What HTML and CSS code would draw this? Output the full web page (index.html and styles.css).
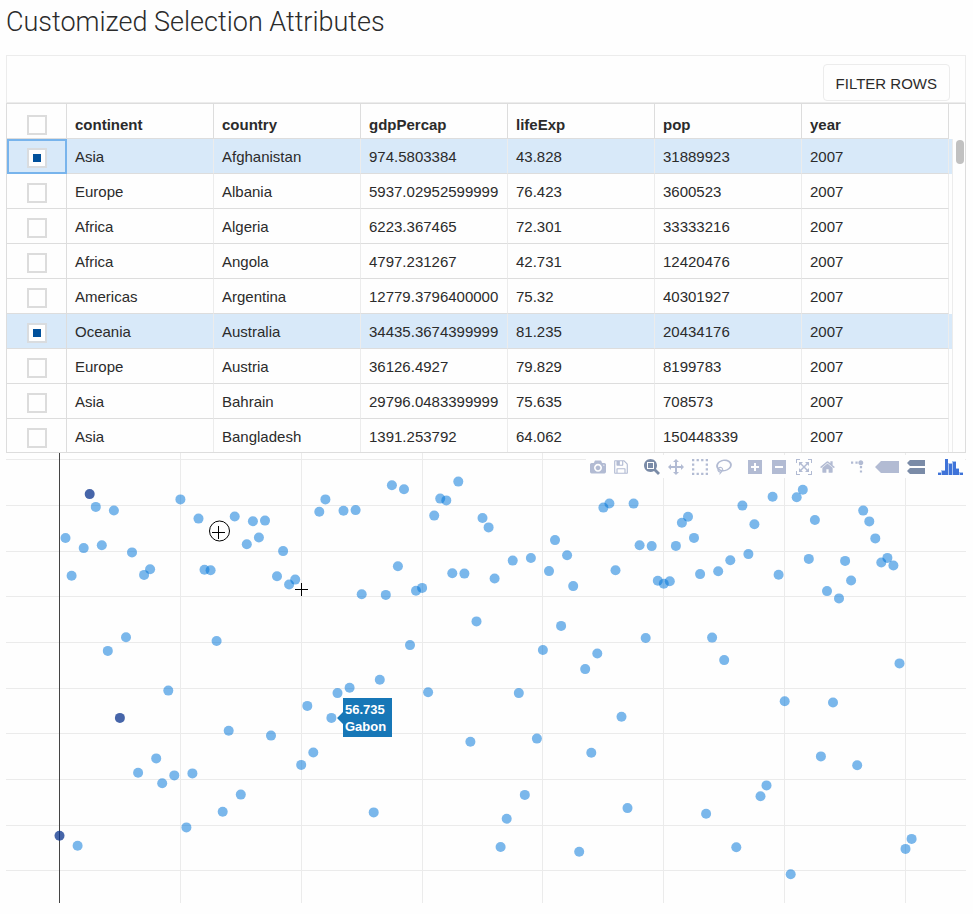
FILE: index.html
```html
<!DOCTYPE html>
<html lang="en">
<head>
<meta charset="utf-8">
<title>Customized Selection Attributes</title>
<link rel="stylesheet" href="styles.css">
</head>
<body>
<main>
  <h1>Customized Selection Attributes</h1>

  <section class="toolbar">
    <button type="button" class="filter-button">FILTER ROWS</button>
  </section>

  <section class="grid">
    <table>
      <colgroup>
        <col class="col-check"><col><col><col><col><col><col><col class="col-end">
      </colgroup>
      <thead>
        <tr>
          <th><input type="checkbox" aria-label="Select all rows"></th>
          <th scope="col">continent</th><th scope="col">country</th><th scope="col">gdpPercap</th><th scope="col">lifeExp</th><th scope="col">pop</th><th scope="col">year</th><td class="end"></td>
        </tr>
      </thead>
      <tbody id="rows"></tbody>
    </table>
    <div class="scrollbar"><div class="thumb"></div></div>
  </section>

  <section class="plot">
    <svg class="chart" viewBox="0 0 960 450" role="img" aria-label="Life expectancy by country">
      <g id="gridlines"></g>
      <path class="zeroline" d="M53.5 0V450"/>
      <g id="points"></g>
      <g class="hover">
        <path class="hover-box" d="M331 265L337 259V245H386V284H337V271Z"/>
        <text x="339" y="261">56.735</text>
        <text x="339" y="278">Gabon</text>
      </g>
      <g class="cursors">
        <circle cx="213.500" cy="78" r="10"/>
        <path d="M206 79.500H219M212.500 73V86M289 136.500H302M295.500 130V143"/>
      </g>
    </svg>
    <div class="modebar">
      <div class="group">
        <button type="button" aria-label="Download plot"><svg width="16" height="16" viewBox="0 0 1000 1000"><path transform="matrix(1 0 0 -1 0 850)" d="m500 450c-83 0-150-67-150-150 0-83 67-150 150-150 83 0 150 67 150 150 0 83-67 150-150 150z m400 150h-120c-16 0-34 13-39 29l-31 93c-6 15-23 28-40 28h-340c-16 0-34-13-39-28l-31-94c-6-15-23-28-40-28h-120c-55 0-100-45-100-100v-450c0-55 45-100 100-100h800c55 0 100 45 100 100v450c0 55-45 100-100 100z m-400-550c-138 0-250 112-250 250 0 138 112 250 250 250 138 0 250-112 250-250 0-138-112-250-250-250z m365 380c-19 0-35 16-35 35 0 19 16 35 35 35 19 0 35-16 35-35 0-19-16-35-35-35z"/></svg></button>
        <button type="button" aria-label="Save and edit"><svg width="14" height="16" viewBox="0 0 857 1000"><path transform="matrix(1 0 0 -1 0 850)" d="m214-7h429v214h-429v-214z m500 0h72v500q0 8-6 21t-11 20l-157 156q-5 6-19 12t-22 5v-232q0-22-15-38t-38-16h-322q-22 0-37 16t-16 38v232h-72v-714h72v232q0 22 16 38t37 16h465q22 0 38-16t15-38v-232z m-214 518v178q0 8-5 13t-13 5h-107q-7 0-13-5t-5-13v-178q0-8 5-13t13-5h107q7 0 13 5t5 13z m357-18v-518q0-22-15-38t-38-16h-750q-23 0-38 16t-16 38v750q0 22 16 38t38 16h517q23 0 50-12t42-26l156-157q16-15 27-42t11-49z"/></svg></button>
      </div>
      <div class="group">
        <button type="button" class="active" aria-label="Zoom"><svg width="16" height="16" viewBox="0 0 1000 1000"><path transform="matrix(1 0 0 -1 0 850)" d="m1000-25l-250 251c40 63 63 138 63 218 0 224-182 406-407 406-224 0-406-182-406-406s183-406 407-406c80 0 155 22 218 62l250-250 125 125z m-812 250l0 438 437 0 0-438-437 0z m62 375l313 0 0-312-313 0 0 312z"/></svg></button>
        <button type="button" aria-label="Pan"><svg width="16" height="16" viewBox="0 0 1000 1000"><path transform="matrix(1 0 0 -1 0 850)" d="m1000 350l-187 188 0-125-250 0 0 250 125 0-188 187-187-187 125 0 0-250-250 0 0 125-188-188 186-187 0 125 252 0 0-250-125 0 187-188 188 188-125 0 0 250 250 0 0-126 187 188z"/></svg></button>
        <button type="button" aria-label="Box select"><svg width="16" height="16" viewBox="0 0 1000 1000"><path transform="matrix(1 0 0 -1 0 850)" d="m0 850l0-143 143 0 0 143-143 0z m286 0l0-143 143 0 0 143-143 0z m285 0l0-143 143 0 0 143-143 0z m286 0l0-143 143 0 0 143-143 0z m-857-286l0-143 143 0 0 143-143 0z m857 0l0-143 143 0 0 143-143 0z m-857-285l0-143 143 0 0 143-143 0z m857 0l0-143 143 0 0 143-143 0z m-857-286l0-143 143 0 0 143-143 0z m286 0l0-143 143 0 0 143-143 0z m285 0l0-143 143 0 0 143-143 0z m286 0l0-143 143 0 0 143-143 0z"/></svg></button>
        <button type="button" aria-label="Lasso select"><svg width="16" height="16" viewBox="0 0 1031 1000"><path transform="matrix(1 0 0 -1 0 850)" d="m1018 538c-36 207-290 336-568 286-277-48-473-256-436-463 10-57 36-108 76-151-13-66 11-137 68-183 34-28 75-41 114-42l-55-70 0 0c-2-1-3-2-4-3-10-14-8-34 5-45 14-11 34-8 45 4 1 1 2 3 2 5l0 0 113 140c16 11 31 24 45 40 4 3 6 7 8 11 48-3 100 0 151 9 278 48 473 255 436 462z m-624-379c-80 14-149 48-197 96 42 42 109 47 156 9 33-26 47-66 41-105z m-187-74c-19 16-33 37-39 60 50-32 109-55 174-68-42-25-95-24-135 8z m360 75c-34-7-69-9-102-8 8 62-16 128-68 170-73 59-175 54-244-5-9 20-16 40-20 61-28 159 121 317 333 354s407-60 434-217c28-159-121-318-333-355z"/></svg></button>
      </div>
      <div class="group">
        <button type="button" aria-label="Zoom in"><svg width="16" height="16" viewBox="0 0 1000 1000"><path transform="matrix(1 0 0 -1 0 850)" d="m1 787l0-875 875 0 0 875-875 0z m687-500l-187 0 0-187-125 0 0 187-188 0 0 125 188 0 0 187 125 0 0-187 187 0 0-125z"/></svg></button>
        <button type="button" aria-label="Zoom out"><svg width="16" height="16" viewBox="0 0 1000 1000"><path transform="matrix(1 0 0 -1 0 850)" d="m0 788l0-876 875 0 0 876-875 0z m688-500l-500 0 0 125 500 0 0-125z"/></svg></button>
        <button type="button" aria-label="Autoscale"><svg width="16" height="16" viewBox="0 0 1000 1000"><path transform="matrix(1 0 0 -1 0 850)" d="m250 850l-187 0-63 0 0-62 0-188 63 0 0 188 187 0 0 62z m688 0l-188 0 0-62 188 0 0-188 62 0 0 188 0 62-62 0z m-875-938l0 188-63 0 0-188 0-62 63 0 187 0 0 62-187 0z m875 188l0-188-188 0 0-62 188 0 62 0 0 62 0 188-62 0z m-125 188l-1 0-93-94-156 156 156 156 92-93 2 0 0 250-250 0 0-2 93-92-156-156-156 156 94 92 0 2-250 0 0-250 0 0 93 93 157-156-157-156-93 94 0 0 0-250 250 0 0 0-94 93 156 157 156-157-93-93 0 0 250 0 0 250z"/></svg></button>
        <button type="button" aria-label="Reset axes"><svg width="15" height="16" viewBox="0 0 929 1000"><path transform="matrix(1 0 0 -1 0 850)" d="m786 296v-267q0-15-11-26t-25-10h-214v214h-143v-214h-214q-15 0-25 10t-11 26v267q0 1 0 2t0 2l321 264 321-264q1-1 1-4z m124 39l-34-41q-5-5-12-6h-2q-7 0-12 3l-386 322-386-322q-7-4-13-4-7 2-12 7l-35 41q-4 5-3 13t6 12l401 334q18 15 42 15t43-15l136-114v109q0 8 5 13t13 5h107q8 0 13-5t5-13v-227l122-102q5-5 6-12t-4-13z"/></svg></button>
      </div>
      <div class="group">
        <button type="button" aria-label="Toggle spike lines"><svg width="16" height="16" viewBox="0 0 1000 1000"><path transform="matrix(1.5 0 0 -1.5 0 850)" d="M512 409c0-57-46-104-103-104-57 0-104 47-104 104 0 57 47 103 104 103 57 0 103-46 103-103z m-327-39l92 0 0 92-92 0z m-185 0l92 0 0 92-92 0z m370-186l92 0 0 93-92 0z m0-184l92 0 0 92-92 0z"/></svg></button>
        <button type="button" aria-label="Show closest data on hover"><svg width="24" height="16" viewBox="0 0 1500 1000"><path transform="matrix(1 0 0 -1 0 850)" d="m375 725l0 0-375-375 375-374 0-1 1125 0 0 750-1125 0z"/></svg></button>
        <button type="button" class="active" aria-label="Compare data on hover"><svg width="18" height="16" viewBox="0 0 1125 1000"><path transform="matrix(1 0 0 -1 0 850)" d="m187 786l0 2-187-188 188-187 0 0 937 0 0 373-938 0z m0-499l0 1-187-188 188-188 0 0 937 0 0 376-938-1z"/></svg></button>
      </div>
      <div class="group logo">
        <a href="#" aria-label="Produced with Plotly"><svg width="25" height="16" viewBox="0 0 25 16"><path class="logo-soft" d="M0 13H3V16H0ZM3 11H7V16H3ZM10 4H14V16H10ZM14 2H18V16H14ZM18 9H21V16H18ZM21 13H25V16H21Z"/><path d="M0 14H3V16H0ZM4 12H7V16H4ZM7 0H10V16H7ZM11 5H14V16H11ZM15 3H18V16H15ZM18 10H21V16H18ZM22 14H25V16H22Z"/></svg></a>
      </div>
    </div>
  </section>
</main>
<script src="app.js"></script>
</body>
</html>
```
FILE: styles.css
```css
* {
  box-sizing: border-box;
}

body {
  margin: 0;
  padding: 0 7px 0 6px;
  background: #fefefe;
  color: #2b2b2b;
  font-family: "Liberation Sans", Arial, sans-serif;
  font-size: 15px;
}

h1 {
  margin: 0;
  padding: 4px 0 15px;
  font-family: Roboto, "Liberation Sans", sans-serif;
  font-size: 27px;
  font-weight: 300;
  line-height: 36px;
}

.toolbar {
  display: flex;
  justify-content: flex-end;
  padding: 8px 15px 1px;
  border: 1px solid #ececec;
}

.filter-button {
  height: 37px;
  padding: 2px 12px 0;
  border: 1px solid #ececec;
  border-radius: 4px;
  background: #fefefe;
  color: #2b2b2b;
  font: inherit;
}

.grid {
  display: flex;
  border: 1px solid #ddd;
}

table {
  flex: 1;
  width: 100%;
  min-width: 0;
  table-layout: fixed;
  border-collapse: separate;
  border-spacing: 0;
}

.col-check {
  width: 60px;
}

.col-end {
  width: 4px;
}

th,
td {
  height: 35px;
  padding: 2px 8px 0;
  overflow: hidden;
  border-right: 1px solid #ececec;
  border-bottom: 1px solid #ddd;
  line-height: 20px;
  text-align: left;
  white-space: nowrap;
}

th {
  padding-top: 7px;
  border-right-color: #ddd;
}

th:first-child,
td:first-child {
  padding-top: 3px;
  border-right-color: #ddd;
  text-align: center;
}

th:first-child {
  padding-top: 7px;
}

tbody tr:last-child td {
  height: 33px;
  padding-top: 3px;
  border-bottom: 0;
}

tbody tr:last-child td:first-child {
  padding-top: 5px;
}

tr .end,
tbody tr:last-child .end {
  padding: 0;
  border-bottom: 0;
}

thead .end {
  border-right: 0;
}

.selected td {
  background: #d8e9f9;
}

td.focused {
  outline: 2px solid #78b4ec;
  outline-offset: -2px;
}

input[type="checkbox"] {
  display: block;
  width: 20px;
  height: 20px;
  margin: 0 auto;
  appearance: none;
  border: 2px solid #dcdcdc;
  background: #fefefe;
}

input[type="checkbox"]:checked {
  border-color: #d9dcdf;
  background: linear-gradient(#00509b, #00509b) center / 8px 8px no-repeat #fefefe;
}

.scrollbar {
  width: 12px;
  padding: 36px 1px 0 3px;
}

.thumb {
  height: 24px;
  border-radius: 4px;
  background: #c1c1c1;
}

.plot {
  position: relative;
}

.chart {
  display: block;
  width: 100%;
}

.gridline {
  fill: none;
  stroke: #ebebeb;
}

.zeroline {
  stroke: #444;
}

.point {
  fill: #0074d9;
  fill-opacity: 0.52;
}

.point.chosen {
  fill: #08318c;
  fill-opacity: 0.75;
}

.hover-box {
  fill: #1777b7;
}

.hover text {
  fill: #fff;
  font-size: 13px;
  font-weight: bold;
}

.cursors {
  fill: none;
  stroke: #000;
}

.modebar {
  position: absolute;
  top: 2px;
  right: 1px;
  display: flex;
  gap: 16px;
  padding: 4px 2px 3px 4px;
  background: #fefefe;
}

.group {
  display: flex;
  gap: 8px;
}

.group svg {
  display: block;
  fill: #b2bbd3;
}

.group button {
  padding: 0;
  border: 0;
  background: none;
}

.group .active svg {
  fill: #7a8ba7;
}

.group.logo {
  margin-left: -3px;
}

.group.logo svg {
  fill: #3f73d8;
}

.group.logo .logo-soft {
  fill: #a9c4f1;
}
```
FILE: app.js
```js
const rows = [
  ["Asia", "Afghanistan", "974.5803384", "43.828", "31889923", "2007"],
  ["Europe", "Albania", "5937.02952599999", "76.423", "3600523", "2007"],
  ["Africa", "Algeria", "6223.367465", "72.301", "33333216", "2007"],
  ["Africa", "Angola", "4797.231267", "42.731", "12420476", "2007"],
  ["Americas", "Argentina", "12779.3796400000", "75.32", "40301927", "2007"],
  ["Oceania", "Australia", "34435.3674399999", "81.235", "20434176", "2007"],
  ["Europe", "Austria", "36126.4927", "79.829", "8199783", "2007"],
  ["Asia", "Bahrain", "29796.0483399999", "75.635", "708573", "2007"],
  ["Asia", "Bangladesh", "1391.253792", "64.062", "150448339", "2007"]
];

// Life expectancy in 2007, one value per country in alphabetical order.
const lifeExp = [
  43.828, 76.423, 72.301, 42.731, 75.32, 81.235, 79.829, 75.635, 64.062, 79.441,
  56.728, 65.554, 74.852, 50.728, 72.39, 73.005, 52.295, 49.58, 59.723, 50.43,
  80.653, 44.741, 50.651, 78.553, 72.961, 72.889, 65.152, 46.462, 55.322, 78.782,
  48.328, 75.748, 78.273, 76.486, 78.332, 54.791, 72.235, 74.994, 71.338, 71.878,
  51.579, 58.04, 52.947, 79.313, 80.657, 56.735, 59.448, 79.406, 60.022, 79.483,
  70.259, 56.007, 46.388, 60.916, 70.198, 82.208, 73.338, 81.757, 64.698, 70.65,
  70.964, 59.545, 78.885, 80.745, 80.546, 72.567, 82.603, 72.535, 54.11, 67.297,
  78.623, 77.588, 71.993, 42.592, 45.678, 73.952, 59.443, 48.303, 74.241, 54.467,
  64.164, 72.801, 76.195, 66.803, 74.543, 71.164, 42.082, 62.069, 52.906, 63.785,
  79.762, 80.204, 72.899, 56.867, 46.859, 80.196, 75.64, 65.483, 75.537, 71.752,
  71.421, 71.688, 75.563, 78.098, 78.746, 76.442, 72.476, 46.242, 65.528, 72.777,
  63.062, 74.002, 42.568, 79.972, 74.663, 77.926, 48.159, 49.339, 80.941, 72.396,
  58.556, 39.613, 80.884, 81.701, 74.143, 78.4, 52.517, 70.616, 58.42, 69.819,
  73.923, 71.777, 51.542, 79.425, 78.242, 76.384, 73.747, 74.249, 73.422, 62.698,
  42.384, 43.487
];

const selectedRows = [0, 5];
const chosenPoints = [0, 5, 10];

document.getElementById("rows").innerHTML = rows.map((row, i) => {
  const on = selectedRows.includes(i);
  const cells = row.map(value => `<td>${value}</td>`).join("");
  return `<tr${on ? ' class="selected"' : ""}>` +
    `<td${i === 0 ? ' class="focused"' : ""}><input type="checkbox" aria-label="Select ${row[1]}"${on ? " checked" : ""}></td>` +
    `${cells}<td class="end"></td></tr>`;
}).join("");

const xAt = index => 53.5 + index * 6.043;
const yAt = value => 417.7 - (value - 40) * 9.133;
const crisp = n => Math.floor(n) + 0.5;

let lines = "";
for (let v = 40; v <= 85; v += 5) lines += `M0 ${crisp(yAt(v))}H960`;
for (let i = 20; i <= 140; i += 20) lines += `M${crisp(xAt(i))} 0V450`;
document.getElementById("gridlines").innerHTML = `<path class="gridline" d="${lines}"/>`;

document.getElementById("points").innerHTML = lifeExp.map((v, i) =>
  `<circle class="point${chosenPoints.includes(i) ? " chosen" : ""}" cx="${xAt(i).toFixed(1)}" cy="${yAt(v).toFixed(1)}" r="5"/>`
).join("");
```
